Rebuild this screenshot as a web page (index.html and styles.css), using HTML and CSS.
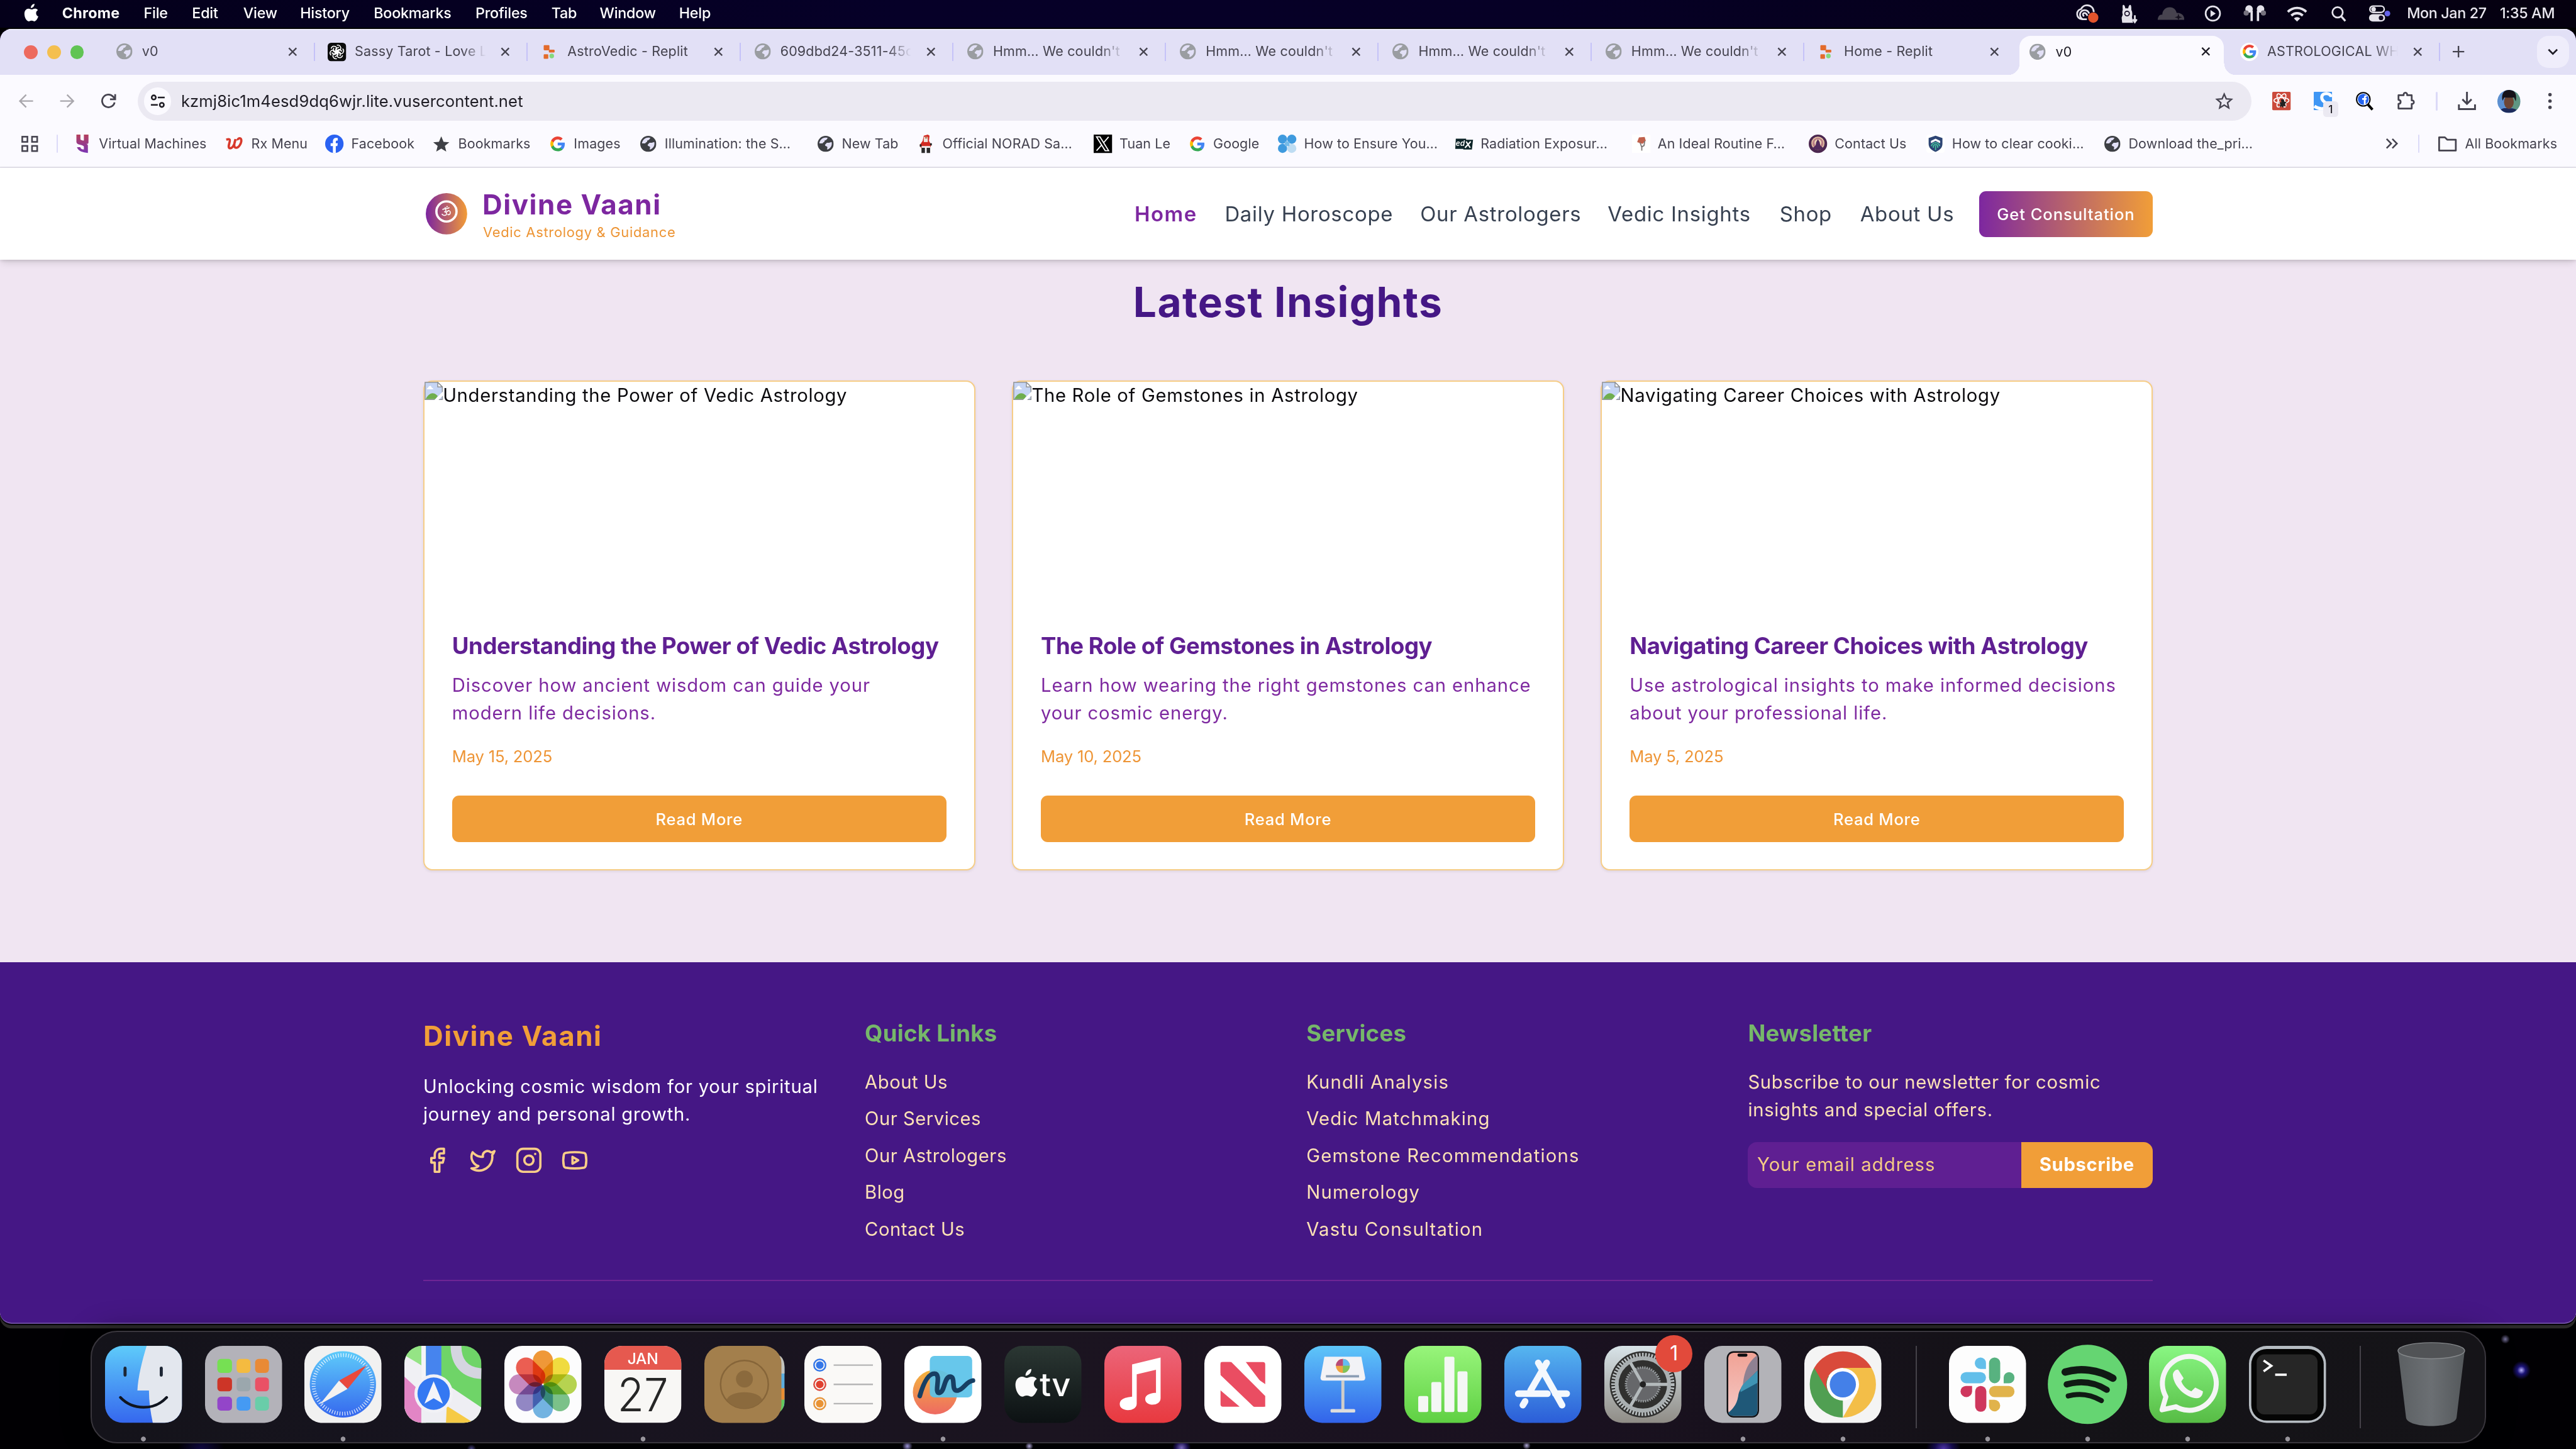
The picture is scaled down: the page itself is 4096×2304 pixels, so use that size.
FILE: index.html
```html
<!DOCTYPE html>
<html lang="en">
<head>
<meta charset="utf-8">
<title>Divine Vaani</title>
<link rel="stylesheet" href="styles.css">
</head>
<body>
<svg class="symbols" aria-hidden="true">
  <symbol id="globe" viewBox="0 0 28 28"><circle cx="14" cy="14" r="14" fill="currentColor"/><path class="land" d="M3 14C3 8 8 3 14 3c2 0 3 .3 4 .8-2 1-1.500 2.200-3 3.200-2 1-3 .5-3 2.500s-3 1.500-3 3.500H3zM24.500 11c1 5-1 9-4.500 11.500-1 .8-2 1-3 1.500-1-1 .5-3 0-4.500s-3.500-1-4-3 1.500-2 2-3.500 3.500-1 5-1 2.500-1.500 4.500-1z"/></symbol>
  <symbol id="google" viewBox="0 0 24 24"><path fill="#4285f4" d="M22.600 12.200c0-.8-.1-1.500-.2-2.200H12v4.300h5.900a5 5 0 0 1-2.200 3.300v2.800h3.600c2.100-2 3.300-4.800 3.300-8.200z"/><path fill="#34a853" d="M12 23c3 0 5.500-1 7.300-2.700l-3.600-2.700c-1 .7-2.200 1-3.700 1-2.900 0-5.300-1.900-6.200-4.500H2.200v2.800A11 11 0 0 0 12 23z"/><path fill="#fbbc05" d="M5.800 14.100a6.600 6.600 0 0 1 0-4.200V7.100H2.200a11 11 0 0 0 0 9.800z"/><path fill="#ea4335" d="M12 5.400c1.600 0 3.100.6 4.200 1.700l3.200-3.200A11 11 0 0 0 2.200 7.100l3.600 2.800C6.700 7.300 9.100 5.400 12 5.400z"/></symbol>
  <symbol id="replit" viewBox="0 0 32 32"><rect x="6" y="4" width="10" height="9" rx="1.500" fill="#e36b2c"/><rect x="15" y="12" width="10" height="5" rx="1.500" fill="#e36b2c"/><rect x="6" y="20" width="8" height="8" rx="1.500" fill="#e36b2c"/><circle cx="20" cy="23" r="4" fill="#84d87c"/></symbol>
  <symbol id="close" viewBox="0 0 16 16"><path d="M1.500 1.500l13 13M14.500 1.500l-13 13" stroke="currentColor" stroke-width="2.600" fill="none"/></symbol>
  <symbol id="broken" viewBox="0 0 32 32"><path d="M1 1h22l8 8v22H1z" fill="#c6d5f4" stroke="#8f9296" stroke-width="1.600"/><path d="M23 1v8h8z" fill="#fff" stroke="#8f9296" stroke-width="1.600"/><path d="M4 13c0-2 2-2 3-4s4-3 5 0 3 1 3 4z" fill="#fff"/><path d="M2 30c3-5 7-10 12-10s8 4 9 5l-4 5z" fill="#6fae4e"/><path d="M17 32l15-15v7l-8 8z" fill="#fff"/></symbol>
  <symbol id="apple" viewBox="0 0 28 32"><path fill="currentColor" d="M19.500 0c.2 2-.6 3.800-1.800 5.200-1.200 1.400-3 2.300-4.600 2.200-.2-1.900.7-3.800 1.800-5C16.100 1 18 .1 19.500 0zM25.500 11c-2 1.200-3.200 3-3.200 5.300 0 2.700 1.600 4.800 3.900 5.700-.9 2.700-3.500 8.400-6.700 8.500-1.900 0-2.600-1.200-5-1.200s-3.100 1.200-5 1.200C5.600 30.400 2 23.500 2 17.500c0-5.600 3.400-9 7.200-9 2.200 0 3.900 1.400 5.300 1.400 1.300 0 3.300-1.600 6-1.500 1.500 0 3.700.6 5 2.600z"/></symbol>
</svg>

<nav class="menubar">
  <ul class="menus">
    <li><svg class="apple"><use href="#apple"/></svg></li>
    <li class="app">Chrome</li><li>File</li><li>Edit</li><li>View</li><li>History</li><li>Bookmarks</li><li>Profiles</li><li>Tab</li><li>Window</li><li>Help</li>
  </ul>
  <div class="status">
    <svg viewBox="0 0 40 34"><path d="M12 27a9 9 0 0 1-9-9c0-5 3.500-8 7-9 2-4 5.500-6.500 10-6.500 7 0 12 5 12 12M13 27c-4-2-5-5-5-8 0-5 4-8 8-8s7 3 8 6M12 27h8M15 22c-3-3-2-6 1-6s4 3 5 5" fill="none" stroke="#e4e2ea" stroke-width="3"/><circle cx="31" cy="24" r="9" fill="#e2542c"/></svg>
    <svg viewBox="0 0 40 34"><path d="M9 2c2 0 3 3 3.500 6h5C18 5 19 2 21 2c2 0 2 5 2 9 2 3 2 9 1 12l2 10H7l-1-9 2-5c-1-3-1-6 0-8 0-4-1-9 1-9z" fill="#e4e2ea"/><circle cx="15.500" cy="17" r="4" fill="none" stroke="#120a24" stroke-width="1.800"/><path d="M29 20v10M25.500 27l3.500 5 3.500-5" stroke="#e4e2ea" stroke-width="3" fill="none"/></svg>
    <svg viewBox="0 0 48 34"><path d="M1 28c0-6 4-10 8-9C9 11 15 6 22 6s11 5 12 10c8-1 14 5 13 12z" fill="#47434f"/><path d="M37 17l1.500 5 5 1.500-5 1.500-1.500 4-1.500-4-5-1.500 5-1.500z" fill="#15101f"/></svg>
    <svg viewBox="0 0 34 34"><circle cx="17" cy="17" r="12.500" fill="none" stroke="#e4e2ea" stroke-width="3"/><path d="M13 11v12l9-6z" fill="#e4e2ea"/></svg>
    <svg viewBox="0 0 40 34"><circle cx="10" cy="9" r="6.500" fill="#e4e2ea"/><circle cx="30" cy="9" r="6.500" fill="#e4e2ea"/><path d="M14.500 12v18M25.500 12v18" stroke="#e4e2ea" stroke-width="4"/><circle cx="5" cy="16" r="4.500" fill="#77737f"/><circle cx="35" cy="16" r="4.500" fill="#77737f"/></svg>
    <svg viewBox="0 0 36 34"><path d="M2 14c9-9 23-9 32 0M8 20.500c6-5.500 14-5.500 20 0" fill="none" stroke="#e4e2ea" stroke-width="4.200"/><path d="M12.500 25.500c3-3 8-3 11 0L18 31z" fill="#e4e2ea"/></svg>
    <svg viewBox="0 0 30 34"><circle cx="13" cy="15" r="9" fill="none" stroke="#e4e2ea" stroke-width="3"/><path d="M19.500 22l7 8" stroke="#e4e2ea" stroke-width="3.500"/></svg>
    <svg viewBox="0 0 40 34"><rect x="3.500" y="4" width="25" height="11" rx="5.500" fill="none" stroke="#e4e2ea" stroke-width="2.600"/><circle cx="10" cy="9.500" r="4" fill="#e4e2ea"/><rect x="2" y="18" width="28" height="13" rx="6.500" fill="#e4e2ea"/><circle cx="23" cy="24.500" r="4" fill="#120a24"/><circle cx="34" cy="17" r="5" fill="#6664e8"/></svg>
  </div>
  <div class="clock"><span>Mon Jan 27</span><span>1:35 AM</span></div>
</nav>

<main class="window">
  <div class="tabstrip">
    <div class="lights"><i class="red"></i><i class="amber"></i><i class="green"></i></div>
    <div class="tab"><svg class="fav grey"><use href="#globe"/></svg><span class="title">v0</span><svg class="x"><use href="#close"/></svg></div>
    <div class="tab"><svg class="fav big" viewBox="0 0 32 32"><rect width="32" height="32" rx="6" fill="#0c0c0d"/><g fill="none" stroke="#fff" stroke-width="1.700"><path id="knot" d="M16 4.500c5-1.500 8 3 6.500 7L14 16.500v-6l5.500-3"/><use href="#knot" transform="rotate(60 16 16)"/><use href="#knot" transform="rotate(120 16 16)"/><use href="#knot" transform="rotate(180 16 16)"/><use href="#knot" transform="rotate(240 16 16)"/><use href="#knot" transform="rotate(300 16 16)"/></g></svg><span class="title fade">Sassy Tarot - Love L</span><svg class="x"><use href="#close"/></svg></div>
    <div class="tab"><svg class="fav big"><use href="#replit"/></svg><span class="title">AstroVedic - Replit</span><svg class="x"><use href="#close"/></svg></div>
    <div class="tab"><svg class="fav grey"><use href="#globe"/></svg><span class="title fade">609dbd24-3511-45c</span><svg class="x"><use href="#close"/></svg></div>
    <div class="tab"><svg class="fav grey"><use href="#globe"/></svg><span class="title fade">Hmm… We couldn't</span><svg class="x"><use href="#close"/></svg></div>
    <div class="tab"><svg class="fav grey"><use href="#globe"/></svg><span class="title fade">Hmm… We couldn't</span><svg class="x"><use href="#close"/></svg></div>
    <div class="tab"><svg class="fav grey"><use href="#globe"/></svg><span class="title fade">Hmm… We couldn't</span><svg class="x"><use href="#close"/></svg></div>
    <div class="tab"><svg class="fav grey"><use href="#globe"/></svg><span class="title fade">Hmm… We couldn't</span><svg class="x"><use href="#close"/></svg></div>
    <div class="tab plain"><svg class="fav big"><use href="#replit"/></svg><span class="title">Home - Replit</span><svg class="x"><use href="#close"/></svg></div>
    <div class="tab active"><svg class="fav grey"><use href="#globe"/></svg><span class="title">v0</span><svg class="x"><use href="#close"/></svg></div>
    <div class="tab"><span class="fav big disc"><svg><use href="#google"/></svg></span><span class="title fade">ASTROLOGICAL WH</span><svg class="x"><use href="#close"/></svg></div>
    <svg class="plus" viewBox="0 0 20 20"><path d="M10 0v20M0 10h20" stroke="currentColor" stroke-width="2.600"/></svg>
    <div class="tabsearch"><svg viewBox="0 0 18 12"><path d="M1.500 2L9 9.500 16.500 2" fill="none" stroke="currentColor" stroke-width="3"/></svg></div>
  </div>

  <div class="toolbar">
    <svg class="tool dim" viewBox="0 0 32 32"><path d="M28 16H6M16 5L5 16l11 11" fill="none" stroke="currentColor" stroke-width="2.600"/></svg>
    <svg class="tool dim" viewBox="0 0 32 32"><path d="M4 16h22M16 5l11 11-11 11" fill="none" stroke="currentColor" stroke-width="2.600"/></svg>
    <svg class="tool" viewBox="0 0 32 32"><path d="M26.500 18.500A11 11 0 1 1 24 8.500L27 12M27.500 4v9h-9" fill="none" stroke="currentColor" stroke-width="3"/></svg>
    <div class="omnibox">
      <span class="site"><svg viewBox="0 0 26 26"><g fill="none" stroke="currentColor" stroke-width="2.800"><circle cx="6" cy="6.500" r="3.600"/><path d="M13 6.500h12M1 19.500h12"/><circle cx="20" cy="19.500" r="3.600"/></g></svg></span>
      <span class="url">kzmj8ic1m4esd9dq6wjr.lite.vusercontent.net</span>
      <svg class="star" viewBox="0 0 32 32"><path d="M16 4l3.600 8.200 9 .8-6.800 6 2 8.800L16 23l-7.800 4.800 2-8.800-6.800-6 9-.8z" fill="none" stroke="currentColor" stroke-width="2.600"/></svg>
    </div>
    <div class="extensions">
      <svg viewBox="0 0 32 32"><rect width="32" height="32" rx="2" fill="#cb4b3b"/><g fill="none" stroke="#fff" stroke-width="1.800"><ellipse cx="16" cy="15" rx="13" ry="5"/><ellipse cx="16" cy="15" rx="13" ry="5" transform="rotate(60 16 15)"/><ellipse cx="16" cy="15" rx="13" ry="5" transform="rotate(120 16 15)"/></g><path d="M15 13h5l1 4 4 1-3 3 2 5-4-2-1 4-3-3-3 2 1-6-2-2 4-1z" fill="#222"/></svg>
      <span class="ext"><svg viewBox="0 0 32 32"><clipPath id="tile"><rect width="32" height="32" rx="1"/></clipPath><g clip-path="url(#tile)"><rect width="32" height="32" fill="#3f96f4"/><path d="M30 9C30 2 15 0 14 9s10 9 9 15-12 8-22 1" fill="none" stroke="#fff" stroke-width="5.500"/></g></svg><b class="count">1</b></span>
      <svg viewBox="0 0 32 32"><path d="M21 21l9 10" stroke="#000" stroke-width="4.500"/><circle cx="14" cy="13" r="11.500" fill="#2464f0" stroke="#000" stroke-width="2.600"/><circle cx="14" cy="13" r="10" fill="none" stroke="#fff" stroke-width="1.200"/><path d="M15 22v-8h-3v-3h3c0-4 1-5.500 5-5v3c-2 0-2 0-2 2h2l-.5 3H18v8z" fill="#fff"/></svg>
      <svg viewBox="0 0 32 32"><path d="M3 6h9c-1-6 7-6 6 0h8v9c5-1 5 7 0 6v8H3v-8c5 0 5-7 0-7z" fill="none" stroke="currentColor" stroke-width="3" stroke-linejoin="round"/></svg>
      <i class="sep"></i>
      <svg viewBox="0 0 32 32"><path d="M16 0v20M8 13l8 8 8-8M2 22v8h28v-8" fill="none" stroke="currentColor" stroke-width="3.200"/></svg>
      <svg class="avatar" viewBox="0 0 40 40"><clipPath id="face"><circle cx="20" cy="20" r="20"/></clipPath><g clip-path="url(#face)"><rect width="40" height="40" fill="#5b8fd0"/><rect x="26" width="14" height="40" fill="#5f9683"/><path d="M4 40c2-10 8-8 16-8s14 0 16 8z" fill="#1d2b5c"/><ellipse cx="20" cy="21" rx="8.500" ry="12" fill="#6e4635"/><path d="M9 19C6 6 12 0 20 0s15 4 12 20l-3-7c-6 1-12 0-17 0z" fill="#15121a"/></g></svg>
      <svg class="dots" viewBox="0 0 8 32"><circle cx="4" cy="5" r="3" fill="currentColor"/><circle cx="4" cy="16" r="3" fill="currentColor"/><circle cx="4" cy="27" r="3" fill="currentColor"/></svg>
    </div>
  </div>

  <div class="bookmarks">
    <svg class="apps" viewBox="0 0 30 28"><g fill="none" stroke="currentColor" stroke-width="2.800"><rect x="1.500" y="1.500" width="9" height="9"/><rect x="18.500" y="1.500" width="9" height="9"/><rect x="1.500" y="17.500" width="9" height="9"/><rect x="18.500" y="17.500" width="9" height="9"/></g></svg>
    <i class="sep"></i>
    <ul class="marks">
      <li><svg viewBox="0 0 32 32"><defs><linearGradient id="vm" x2="0" y2="1"><stop stop-color="#b5405c"/><stop offset="1" stop-color="#7a35b4"/></linearGradient></defs><path d="M6 0h7v8c0 2 6 3 6 2V0h8v13c0 3-1 3-4 3 3 1 3 2 3 4v12c-9-1-17-3-19-10h6c0 3 3 4 6 4v-5c0-4-12-2-13-8z" fill="url(#vm)"/></svg><span>Virtual Machines</span></li>
      <li><svg viewBox="0 0 32 32"><path d="M2 9c7-3 7 0 5 7s0 9 4 7 6-9 7-15c-2 6-4 15 1 15s10-9 9-14-7-2-6 1" fill="none" stroke="#d8392c" stroke-width="4"/></svg><span>Rx Menu</span></li>
      <li><svg viewBox="0 0 32 32"><circle cx="16" cy="16" r="16" fill="#2a62f2"/><path d="M13.500 32V20H9.500v-5h4v-3c0-5 3-7 8.500-6v4.500c-3-.3-3.500 0-3.500 4.500h3.500l-.8 5h-2.700v12z" fill="#fff"/></svg><span>Facebook</span></li>
      <li><svg viewBox="0 0 32 32"><path d="M16 3l4 9.500 10 .8-7.700 6.500 2.400 9.800L16 24.400l-8.700 5.200 2.400-9.800L2 13.300l10-.8z" fill="#3f4046"/></svg><span>Bookmarks</span></li>
      <li><svg class="g"><use href="#google"/></svg><span>Images</span></li>
      <li><svg class="gl"><use href="#globe"/></svg><span>Illumination: the S…</span></li>
      <li><svg class="gl"><use href="#globe"/></svg><span>New Tab</span></li>
      <li><svg viewBox="0 0 32 32"><path d="M13 2l7-2 3 2-1 9 4 7-2 5H8l-2-5 5-7z" fill="#d32b22"/><rect x="13" y="4" width="7" height="9" fill="#efe5df"/><rect x="15" y="4" width="4" height="3" fill="#b98160"/><path d="M9 22h6v10H9zM18 22h6v10h-6z" fill="#2a2a2a"/><path d="M9 20h15v3H9z" fill="#f3eeee"/><path d="M6 17h3v4H6zM24 15h3v4h-3z" fill="#222"/></svg><span>Official NORAD Sa…</span></li>
      <li><svg viewBox="0 0 32 32"><rect width="32" height="32"/><path d="M5 4h6l15 24h-6zM26 4L17 14.500M14 18L5 28" fill="none" stroke="#fff" stroke-width="2"/></svg><span>Tuan Le</span></li>
      <li><svg class="g"><use href="#google"/></svg><span>Google</span></li>
      <li><svg viewBox="0 0 32 32"><g fill="#3f9ade"><circle cx="8" cy="8" r="8"/><circle cx="24" cy="8" r="8"/><circle cx="8" cy="24" r="8"/></g><circle cx="24" cy="24" r="8" fill="#bedcf2"/><rect x="12" y="12" width="8" height="8" fill="#77bce9"/></svg><span>How to Ensure You…</span></li>
      <li><svg viewBox="0 0 32 32"><path d="M2 7h18l-1 18H1zM17 9h15l-2 17H15z" fill="#0d2428"/><text x="2" y="20" font-family="Inter" font-size="13" font-weight="600" font-style="italic" fill="#fff">ed</text><path d="M20 12l7 11M28 12L18 23" stroke="#fff" stroke-width="2.400"/></svg><span>Radiation Exposur…</span></li>
      <li><svg viewBox="0 0 32 32"><rect width="32" height="32" fill="#fff"/><path d="M12 5l10-1 2 7-6 5-9-3z" fill="#c0614c"/><path d="M14 14l3 8v6M22 11l-1 8-5 3" fill="none" stroke="#7f7a78" stroke-width="2"/></svg><span>An Ideal Routine F…</span></li>
      <li><svg viewBox="0 0 32 32"><circle cx="16" cy="16" r="16" fill="#4c2750"/><circle cx="16" cy="15" r="10.500" fill="#b97d86" stroke="#e2c0a0" stroke-width="2"/><circle cx="16" cy="14" r="6" fill="#eed5b8"/><path d="M16 8l3 5 1 6 6 5c-6 3-14 3-20 0l6-5 1-6z" fill="#522a5c"/></svg><span>Contact Us</span></li>
      <li><svg viewBox="0 0 32 32"><rect width="32" height="32" rx="5" fill="#fff"/><path d="M16 2l12 4v10c0 7-5 11-12 14C9 27 4 23 4 16V6z" fill="#2d4474"/><path d="M8 11l8-4 8 4v4l-8-4-8 4z" fill="#fff"/><path d="M9 20c1-8 13-8 14 0M12 23c0-8 8-8 8 0M16 19v8" fill="none" stroke="#45bd9b" stroke-width="2"/></svg><span>How to clear cooki…</span></li>
      <li><svg class="gl"><use href="#globe"/></svg><span>Download the_pri…</span></li>
    </ul>
    <svg class="more" viewBox="0 0 22 18"><path d="M2 1l8 8-8 8M12 1l8 8-8 8" fill="none" stroke="currentColor" stroke-width="2.800"/></svg>
    <i class="sep"></i>
    <div class="all"><svg viewBox="0 0 32 26"><path d="M1.500 1.500h10l4 4h15v19h-29z" fill="none" stroke="currentColor" stroke-width="3" stroke-linejoin="round"/></svg><span>All Bookmarks</span></div>
  </div>

  <div class="page">
    <header class="site-header">
      <div class="brand">
        <svg class="logo" viewBox="0 0 72 72"><defs><linearGradient id="lg"><stop stop-color="#7b24a0"/><stop offset="1" stop-color="#f39c36"/></linearGradient></defs><circle cx="36" cy="36" r="36" fill="url(#lg)"/><circle cx="36" cy="32" r="17.500" fill="none" stroke="#fff" stroke-width="4"/><path d="M29 29c3-3 7-1 6 1.500-.5 1.500-2 2-3 2 3 0 5 2 4 4.500-1.500 3-7 2-8-1M35 33c3 0 3-3 5.500-2.500 3 1 3 6 0 7-1 .5-2 0-2.500-1M33 25c2 2.500 6 2.500 8 0" fill="none" stroke="#fff" stroke-width="1.700"/><circle cx="37" cy="23.600" r="1.200" fill="#fff"/></svg>
        <div><div class="brand-name">Divine Vaani</div><div class="brand-sub">Vedic Astrology &amp; Guidance</div></div>
      </div>
      <div class="links"><a class="home">Home</a><a>Daily Horoscope</a><a>Our Astrologers</a><a>Vedic Insights</a><a>Shop</a><a>About Us</a></div>
      <button class="consult">Get Consultation</button>
    </header>

    <section class="insights">
      <h2>Latest Insights</h2>
      <div class="cards">
        <article class="card">
          <div class="image"><svg><use href="#broken"/></svg><span>Understanding the Power of Vedic Astrology</span></div>
          <div class="body"><h3>Understanding the Power of Vedic Astrology</h3><p>Discover how ancient wisdom can guide your<br>modern life decisions.</p><time>May 15, 2025</time><button>Read More</button></div>
        </article>
        <article class="card">
          <div class="image"><svg><use href="#broken"/></svg><span>The Role of Gemstones in Astrology</span></div>
          <div class="body"><h3>The Role of Gemstones in Astrology</h3><p>Learn how wearing the right gemstones can enhance<br>your cosmic energy.</p><time>May 10, 2025</time><button>Read More</button></div>
        </article>
        <article class="card">
          <div class="image"><svg><use href="#broken"/></svg><span>Navigating Career Choices with Astrology</span></div>
          <div class="body"><h3>Navigating Career Choices with Astrology</h3><p>Use astrological insights to make informed decisions<br>about your professional life.</p><time>May 5, 2025</time><button>Read More</button></div>
        </article>
      </div>
    </section>

    <footer class="footer">
      <div class="columns">
        <div>
          <div class="foot-name">Divine Vaani</div>
          <p class="about">Unlocking cosmic wisdom for your spiritual<br>journey and personal growth.</p>
          <div class="social">
            <svg viewBox="0 0 24 24"><path d="M18 2h-3a5 5 0 0 0-5 5v3H7v4h3v8h4v-8h3l1-4h-4V7a1 1 0 0 1 1-1h3z"/></svg>
            <svg viewBox="0 0 24 24"><path d="M22 4s-.7 2.100-2 3.400c1.600 10-9.400 17.300-18 11.600 2.200.1 4.400-.6 6-2C3 15.500.5 9.600 3 5c2.200 2.600 5.600 4.100 9 4-.9-4.200 4-6.600 7-3.800 1.100 0 3-1.200 3-1.200z"/></svg>
            <svg viewBox="0 0 24 24"><rect x="2" y="2" width="20" height="20" rx="5"/><path d="M16 11.370A4 4 0 1 1 12.630 8 4 4 0 0 1 16 11.370zM17.500 6.500h.01"/></svg>
            <svg viewBox="0 0 24 24"><path d="M2.500 17a24.120 24.120 0 0 1 0-10 2 2 0 0 1 1.400-1.400 49.560 49.560 0 0 1 16.200 0A2 2 0 0 1 21.500 7a24.120 24.120 0 0 1 0 10 2 2 0 0 1-1.400 1.400 49.550 49.550 0 0 1-16.200 0A2 2 0 0 1 2.500 17M10 15l5-3-5-3z"/></svg>
          </div>
        </div>
        <div class="quick"><h4>Quick Links</h4><ul><li>About Us</li><li>Our Services</li><li>Our Astrologers</li><li>Blog</li><li>Contact Us</li></ul></div>
        <div class="services"><h4>Services</h4><ul><li>Kundli Analysis</li><li>Vedic Matchmaking</li><li>Gemstone Recommendations</li><li>Numerology</li><li>Vastu Consultation</li></ul></div>
        <div><h4>Newsletter</h4><p class="offer">Subscribe to our newsletter for cosmic<br>insights and special offers.</p><div class="form"><input placeholder="Your email address"><button>Subscribe</button></div></div>
      </div>
    </footer>
  </div>
</main>

<div class="dock">
  <svg viewBox="0 0 100 100" class="on"><defs><clipPath id="sq"><rect width="100" height="100" rx="23"/></clipPath><linearGradient id="fb" x2="0" y2="1"><stop stop-color="#5ecbfa"/><stop offset="1" stop-color="#3567ee"/></linearGradient></defs><g clip-path="url(#sq)"><rect width="100" height="100" fill="url(#fb)"/><path d="M54 0C48 20 43 40 42 58h15c0 14 2 28 5 42h38V0z" fill="#e3e7ee"/><path d="M26 29v9M73 29v9" stroke="#1d2634" stroke-width="4" stroke-linecap="round"/><path d="M20 67c16 17 44 17 60 0" fill="none" stroke="#10151f" stroke-width="3.500" stroke-linecap="round"/></g></svg>
  <svg viewBox="0 0 100 100"><rect width="100" height="100" rx="23" fill="#b3b2b9"/><g><rect x="16" y="17" width="19" height="18" rx="4.500" fill="#76e053"/><rect x="41" y="17" width="18" height="18" rx="4.500" fill="#f4bb40"/><rect x="65" y="17" width="18" height="18" rx="4.500" fill="#e98a35"/><rect x="16" y="41" width="19" height="18" rx="4.500" fill="#cd3527"/><rect x="41" y="41" width="18" height="18" rx="4.500" fill="#9ba7ad"/><rect x="65" y="41" width="18" height="18" rx="4.500" fill="#ea5165"/><rect x="16" y="66" width="19" height="18" rx="4.500" fill="#9345c9"/><rect x="41" y="66" width="18" height="18" rx="4.500" fill="#459af3"/><rect x="65" y="66" width="18" height="18" rx="4.500" fill="#69cda9"/></g></svg>
  <svg viewBox="0 0 100 100" class="on"><rect width="100" height="100" rx="23" fill="#f1f1f1"/><circle cx="50" cy="50" r="43" fill="url(#fb)"/><circle cx="50" cy="50" r="38" fill="none" stroke="#fff" stroke-width="5" stroke-dasharray="1 2.316" opacity=".85"/><path d="M81 25L56 56 45 45z" fill="#e9493c"/><path d="M20 76l25-31 11 11z" fill="#f4f2f0"/></svg>
  <svg viewBox="0 0 100 100"><g clip-path="url(#sq)"><rect width="100" height="100" fill="#6fd468"/><path d="M0 10l22 15v75H0z" fill="#f0f0f4"/><path d="M0 0h22v25L0 12z" fill="#95e485"/><path d="M0 40l24 22v38H0z" fill="#e285c5"/><rect x="22" y="0" width="6" height="100" fill="#f4f4f7"/><rect x="28" width="20" height="50" fill="#4684ee"/><path d="M48 45l52 35v20H22V80z" fill="#eeeef3"/><path d="M55 78l35 22H54z" fill="#f6ca45"/><path d="M67 0c0 22 12 35 33 36" fill="none" stroke="#d5d5e0" stroke-width="14"/></g><circle cx="38" cy="62" r="25" fill="#f1f1f6"/><circle cx="38" cy="62" r="21" fill="#3478f2"/><path d="M38 46l12 29-12-7-12 7z" fill="#f4f4f8"/></svg>
  <svg viewBox="0 0 100 100"><rect width="100" height="100" rx="23" fill="#fcfcfd"/><g class="petals"><rect x="37" y="6" width="26" height="43" rx="13" fill="#f29a38"/><rect x="37" y="6" width="26" height="43" rx="13" fill="#f3de3f" transform="rotate(45 50 50)"/><rect x="37" y="6" width="26" height="43" rx="13" fill="#b8d650" transform="rotate(90 50 50)"/><rect x="37" y="6" width="26" height="43" rx="13" fill="#7cc48a" transform="rotate(135 50 50)"/><rect x="37" y="6" width="26" height="43" rx="13" fill="#74b5e3" transform="rotate(180 50 50)"/><rect x="37" y="6" width="26" height="43" rx="13" fill="#9489c6" transform="rotate(225 50 50)"/><rect x="37" y="6" width="26" height="43" rx="13" fill="#c98bc0" transform="rotate(270 50 50)"/><rect x="37" y="6" width="26" height="43" rx="13" fill="#ee5f52" transform="rotate(315 50 50)"/></g></svg>
  <svg viewBox="0 0 100 100" class="on"><g clip-path="url(#sq)"><rect width="100" height="100" fill="#f8f7f5"/><rect width="100" height="31" fill="#e6594f"/></g><text x="50" y="24" text-anchor="middle" font-family="Inter" font-size="20" font-weight="500" textLength="40" fill="#fff">JAN</text><text x="50" y="85" text-anchor="middle" font-family="Inter" font-size="60" font-weight="300" textLength="66" lengthAdjust="spacingAndGlyphs" fill="#262626">27</text></svg>
  <svg viewBox="0 0 100 100"><path d="M80 12q24 2 24 16v46q0 13-24 14z" fill="#5caedf"/><path d="M96 12q8 3 8 16v8h-8z" fill="#c3c3bd"/><path d="M95 55h9v15h-9z" fill="#eb8f33"/><path d="M95 70h9q0 14-9 17z" fill="#63c95c"/><rect width="100" height="100" rx="23" fill="#a37f4c"/><circle cx="52" cy="50" r="31" fill="none" stroke="#866539" stroke-width="2"/><circle cx="52" cy="43" r="11" fill="#8b6a3d"/><path d="M29 70c4-13 42-13 46 0-11 15-35 15-46 0z" fill="#8b6a3d"/></svg>
  <svg viewBox="0 0 100 100"><rect width="100" height="100" rx="23" fill="#faf9f7"/><path d="M38 25h51M38 50h51M38 75h51" stroke="#b5b5b5" stroke-width="2"/><g fill="none" stroke-width="2"><circle cx="20" cy="25" r="7.500" stroke="#3577e8"/><circle cx="20" cy="50" r="7.500" stroke="#dd4b3e"/><circle cx="20" cy="75" r="7.500" stroke="#e7963c"/></g><circle cx="20" cy="25" r="5" fill="#3577e8"/><circle cx="20" cy="50" r="5" fill="#e0402f"/><circle cx="20" cy="75" r="5" fill="#e99335"/></svg>
  <svg viewBox="0 0 100 100" class="on"><defs><linearGradient id="ff" x2="0" y2="1"><stop stop-color="#f3b53d"/><stop offset="1" stop-color="#ee6a62"/></linearGradient></defs><rect width="100" height="100" rx="23" fill="#fff"/><ellipse cx="40" cy="60" rx="29" ry="29" fill="url(#ff)"/><rect x="33" y="13" width="55" height="54" rx="6" fill="#5bc3ea" opacity=".93"/><path d="M20 65c4-14 10-29 19-29 10 0-1 25 6 25 8 0 6-22 15-21 7 1 0 19 9 18 8-1 11-12 20-13" fill="none" stroke="#173f63" stroke-width="6" stroke-linecap="round"/></svg>
  <svg viewBox="0 0 100 100"><defs><linearGradient id="tv" x2="0" y2="1"><stop stop-color="#2b3733"/><stop offset="1" stop-color="#0c1113"/></linearGradient></defs><rect width="100" height="100" rx="23" fill="url(#tv)"/><path transform="translate(12 30) scale(1.180)" fill="#fafafa" d="M19.500 0c.2 2-.6 3.800-1.800 5.200-1.200 1.400-3 2.300-4.600 2.200-.2-1.900.7-3.800 1.800-5C16.100 1 18 .1 19.500 0zM25.500 11c-2 1.200-3.200 3-3.200 5.300 0 2.700 1.600 4.800 3.900 5.700-.9 2.700-3.500 8.400-6.700 8.500-1.900 0-2.600-1.200-5-1.200s-3.100 1.200-5 1.200C5.600 30.400 2 23.500 2 17.500c0-5.600 3.400-9 7.200-9 2.200 0 3.900 1.400 5.300 1.400 1.300 0 3.300-1.600 6-1.500 1.500 0 3.700.6 5 2.600z"/><text x="46" y="65.500" font-family="Inter" font-size="42" font-weight="500" textLength="40" lengthAdjust="spacingAndGlyphs" fill="#fafafa">tv</text></svg>
  <svg viewBox="0 0 100 100"><defs><linearGradient id="mu" x2="0" y2="1"><stop stop-color="#ec6579"/><stop offset="1" stop-color="#e8393f"/></linearGradient></defs><rect width="100" height="100" rx="23" fill="url(#mu)"/><path d="M36 24l37-9v53c0 11-20 11-20 1 0-6 8-8 14-8V31l-25 6v38c0 11-22 11-22 1 0-8 9-9 16-10z" fill="#fff"/></svg>
  <svg viewBox="0 0 100 100"><rect width="100" height="100" rx="23" fill="#fff"/><rect x="21" y="21" width="58" height="58" rx="3" fill="#ea4d62"/><path d="M34 19h18l29 40v-8zM19 50v-10l28 41h18z" fill="#fff"/><path d="M33 20L81 80V57L53 20zM20 37v20l27 23h18z" fill="#fff"/><path d="M21 22v13l44 44h14V65L35 21H22z" fill="#ea4d62"/></svg>
  <svg viewBox="0 0 100 100"><defs><linearGradient id="kn" x2="0" y2="1"><stop stop-color="#5ec6f9"/><stop offset="1" stop-color="#3263ea"/></linearGradient></defs><rect width="100" height="100" rx="23" fill="url(#kn)"/><path d="M26 14h48l5 27c0 3-1 4-4 4H25c-3 0-4-1-4-4z" fill="#f2f2f6"/><path d="M28 38h43v3H28z" fill="#8b9db4"/><path d="M48 45h4v38h-4z" fill="#d0cdc9"/><rect x="34" y="82" width="32" height="4.500" rx="1.500" fill="#ddd"/><circle cx="50" cy="26" r="9" fill="#f1a340"/><path d="M50 17a9 9 0 0 1 9 9h-9z" fill="#63bdf2"/><path d="M59 26a9 9 0 0 1-9 9v-9z" fill="#7ec45c"/><path d="M50 17a9 9 0 0 0-9 9h9z" fill="#b74a79"/></svg>
  <svg viewBox="0 0 100 100"><defs><linearGradient id="nu" x2="0" y2="1"><stop stop-color="#98f57b"/><stop offset="1" stop-color="#5fd043"/></linearGradient></defs><rect width="100" height="100" rx="23" fill="url(#nu)"/><g fill="#f4f7f4"><rect x="18" y="65" width="13" height="21" rx="2"/><rect x="35" y="47" width="13" height="39" rx="2"/><rect x="52" y="14" width="13" height="72" rx="2"/><rect x="69" y="33" width="13" height="53" rx="2"/></g></svg>
  <svg viewBox="0 0 100 100"><defs><linearGradient id="as" x2="0" y2="1"><stop stop-color="#56b6f0"/><stop offset="1" stop-color="#2b5dd8"/></linearGradient></defs><rect width="100" height="100" rx="23" fill="url(#as)"/><g stroke="#f4f8fd" stroke-width="8.500" stroke-linecap="round"><path d="M55 22L34 58M44 22l31 55M18 62h38M66 62h15M27 72l-3 5"/></g></svg>
  <span class="badged"><svg viewBox="0 0 100 100"><defs><linearGradient id="se" x2="0" y2="1"><stop stop-color="#d8e3e8"/><stop offset="1" stop-color="#8f8c86"/></linearGradient></defs><rect width="100" height="100" rx="23" fill="url(#se)"/><circle cx="50" cy="50" r="43" fill="#30302f"/><circle cx="50" cy="50" r="38.500" fill="none" stroke="#b8bec0" stroke-width="5" stroke-dasharray="2.200 1.800"/><circle cx="50" cy="50" r="34" fill="none" stroke="#a9afb1" stroke-width="5"/><circle cx="50" cy="50" r="22" fill="#66676a" stroke="#989da0" stroke-width="3" stroke-dasharray="1.500 1.500"/><path d="M50 50h32M50 50L34 22M50 50L34 78" stroke="#b4babc" stroke-width="4"/><circle cx="50" cy="50" r="4" fill="#222"/></svg><b class="badge">1</b></span>
  <svg viewBox="0 0 100 100" class="on"><defs><linearGradient id="ph" x1="0" y1="0" x2="0" y2="1"><stop stop-color="#f0a295"/><stop offset="1" stop-color="#f5c9c6"/></linearGradient></defs><rect width="100" height="100" rx="23" fill="#b3b3b8"/><rect x="29" y="7" width="42" height="86" rx="9" fill="#0f0f12"/><rect x="31" y="9" width="38" height="82" rx="7" fill="url(#ph)"/><path d="M69 12c-14 10-18 25-19 40l19-8z" fill="#8f8192"/><path d="M69 32C56 46 46 52 44 65s-9 18-13 22q1 4 7 4h24q7 0 7-7z" fill="#1f5878"/><path d="M69 32C56 46 46 50 47 60l22-12z" fill="#3f94b4"/><rect x="43" y="10" width="13" height="4" rx="2" fill="#0f0f12"/></svg>
  <svg viewBox="0 0 100 100" class="on"><rect width="100" height="100" rx="23" fill="#f4f4f4"/><path d="M12.800 28.500L50 50l0 43A43 43 0 0 1 12.800 28.500z" fill="#509f52"/><path d="M87.200 28.500A43 43 0 0 1 50 93l18.600-32.500L50 28.500z" fill="#f3be48"/><path d="M12.800 28.500A43 43 0 0 1 87.200 28.500H50a21.500 21.500 0 0 0-18.600 32.300z" fill="#d94a3b"/><circle cx="50" cy="50" r="21" fill="#fff"/><circle cx="50" cy="50" r="17" fill="#4480e8"/></svg>
  <i class="divider"></i>
  <svg viewBox="0 0 100 100" class="on"><rect width="100" height="100" rx="23" fill="#fdfdfd"/><g fill="#63bfea"><path d="M41 15a7 7 0 0 1 7 7v8h-7a7 7 0 0 1 0-15z"/><rect x="15" y="34" width="33" height="14.500" rx="7.200"/></g><g fill="#58b280"><rect x="52" y="15" width="14.500" height="33.500" rx="7.200"/><path d="M85 41a7 7 0 0 1-7 7.500h-7V41a7 7 0 0 1 14 0z"/></g><g fill="#cf375d"><rect x="34" y="52" width="14.500" height="33.500" rx="7.200"/><path d="M15 59a7 7 0 0 1 7-7h8v7a7 7 0 0 1-15 0z"/></g><g fill="#e1b34b"><rect x="52" y="52" width="33" height="14.500" rx="7.200"/><path d="M59 85a7 7 0 0 1-7-7v-8h7a7 7 0 0 1 0 15z"/></g></svg>
  <svg viewBox="0 0 100 100" class="on"><circle cx="50" cy="50" r="51.500" fill="#65d572"/><g fill="none" stroke="#101a14" stroke-linecap="round"><path d="M21 34c20-6 43-3 62 8" stroke-width="9.500"/><path d="M23 50c18-5 36-3 52 7" stroke-width="8"/><path d="M25 65c15-4 29-2 43 6" stroke-width="6.500"/></g></svg>
  <svg viewBox="0 0 100 100" class="on"><defs><linearGradient id="wa" x2="0" y2="1"><stop stop-color="#89f783"/><stop offset="1" stop-color="#57bc45"/></linearGradient></defs><rect width="100" height="100" rx="23" fill="url(#wa)"/><path d="M17 83l5-17A35 35 0 1 1 35 79z" fill="none" stroke="#f5f5f5" stroke-width="6.500" stroke-linejoin="round"/><path d="M38 31c-3-1-6 2-7 6 0 15 17 31 31 31 5 0 8-4 8-9l-10-5-5 5c-6-2-11-7-13-13l3-4z" fill="#f5f5f5"/></svg>
  <svg viewBox="0 0 100 100" class="on"><rect width="100" height="100" rx="23" fill="#b6bcc2"/><rect x="3" y="4" width="94" height="93" rx="20" fill="#050505"/><rect x="10" y="11" width="79" height="78" rx="10" fill="#262626"/><path d="M19 19l10 7-10 7M34 37.500h15" fill="none" stroke="#fff" stroke-width="3"/></svg>
  <i class="divider last"></i>
  <svg viewBox="0 0 118 148" class="trash"><defs><linearGradient id="tr"><stop stop-color="#5c6063"/><stop offset=".5" stop-color="#6b6f73"/><stop offset="1" stop-color="#54585b"/></linearGradient></defs><path d="M1 15l14 116c2 20 86 20 88 0L117 15z" fill="url(#tr)"/><ellipse cx="59" cy="15" rx="58" ry="14" fill="#515356" stroke="#85888b" stroke-width="1.500"/></svg>
</div>
</body>
</html>
```
FILE: styles.css
```css
/* 1rem is ten units of a 4480-unit wide desktop */
* { box-sizing: border-box; margin: 0; padding: 0; }
html { font-size: calc(100vw / 448); }
body {
  width: 100vw; height: 100vh; overflow: hidden;
  display: flex; flex-direction: column;
  font-family: "Inter", sans-serif;
  background:
    radial-gradient(circle at 438.500rem 238.300rem, #b9b4ff 0, #1c1478 .7rem, transparent 1.600rem),
    radial-gradient(circle at 435.700rem 232.900rem, #77739c 0, transparent .8rem),
    radial-gradient(circle at 338rem 252rem, #5b3ec0 0, #180d5a 1.500rem, transparent 3rem),
    radial-gradient(circle at 205.500rem 251.800rem, #8e7ad8 0, #21145e 1rem, transparent 1.600rem),
    radial-gradient(circle at 157.800rem 251.500rem, #b8adff 0, transparent .9rem),
    radial-gradient(circle at 179rem 251.500rem, #d0c6ff 0, transparent .7rem),
    radial-gradient(circle at 265.500rem 251.400rem, #d0c6ff 0, transparent .7rem),
    radial-gradient(circle at 35rem 252rem, #120a4a 0, transparent 4rem),
    radial-gradient(circle at 82rem 252rem, #55509a 0, transparent .8rem),
    #010003;
}
ul { list-style: none; }
button, input { font: inherit; border: 0; }
svg { display: block; flex: none; overflow: visible; }
.symbols { position: absolute; width: 0; height: 0; }

/* menu bar */
.menubar { height: 5rem; flex: none; display: flex; color: #fff; font-size: 2.550rem; font-weight: 500; line-height: 4.700rem; letter-spacing: -.025rem; background: linear-gradient(90deg, #04001a, #060028 35%, #060026 60%, #05000f); border-bottom: 2px solid #000; }
.menus { display: grid; grid-template-columns: 6.800rem 14.200rem 8.400rem 8.900rem 9.900rem 12.800rem 17.700rem 13.200rem 8.400rem 13.800rem 6rem; padding-left: 4rem; white-space: nowrap; }
.apple { width: 2.800rem; height: 3.200rem; margin-top: .7rem; }
.app { font-weight: 700; letter-spacing: .03rem; }
.status { margin-left: auto; display: grid; grid-template-columns: 7.500rem 7.300rem 7.200rem 7.200rem 7.400rem 7.400rem 7rem 7.200rem; justify-items: center; align-items: center; padding-right: 1.200rem; }
.status svg { height: 3.400rem; }
.clock { display: flex; justify-content: space-between; width: 25.700rem; margin-right: 3.700rem; color: #e9e7ee; letter-spacing: -.04rem; white-space: nowrap; }

/* browser window */
.window { height: 225.200rem; flex: none; display: flex; flex-direction: column; border-radius: 2rem; overflow: hidden; background: #451785; border-bottom: 2px solid #6b4a9f; box-shadow: 0 .2rem 0 #000, 0 .3rem 0 #26252a, 0 .8rem 0 #2b2a28; }
.tabstrip { height: 8rem; flex: none; display: flex; align-items: center; background: #e2e0f6; box-shadow: inset 0 .2rem #eeedfb; color: #45434f; font-size: 2.350rem; }
.lights { width: 17.800rem; padding-left: 4.200rem; display: flex; gap: 1.600rem; padding-top: .2rem; }
.lights i { width: 2.400rem; height: 2.400rem; border-radius: 50%; }
.red { background: #ed6a5e; } .amber { background: #f4bf4f; } .green { background: #61c454; }
.tab { width: 37rem; height: 3.200rem; flex: none; display: flex; align-items: center; position: relative; padding-left: 2.200rem; border-right: .3rem solid #c5c2f8; }
.tab.plain, .tab.active { border-right-color: transparent; }
.fav { width: 2.800rem; height: 2.800rem; margin: 0 .2rem; }
.fav.big { width: 3.200rem; height: 3.200rem; margin: 0; }
.grey { color: #9a9da1; }
.land { fill: #e2e0f6; }
.disc { background: #fff; border-radius: 50%; display: grid; place-items: center; }
.disc svg { width: 2.600rem; height: 2.600rem; }
.title { width: 22.800rem; margin: 0 2.600rem 0 1.500rem; white-space: nowrap; overflow: hidden; line-height: 3.200rem; letter-spacing: .02rem; transform: translateY(-.1rem); }
.fade { -webkit-mask-image: linear-gradient(90deg, #000 82%, transparent); mask-image: linear-gradient(90deg, #000 82%, transparent); }
.x { width: 1.600rem; height: 1.600rem; }
.tab.active { height: 6.800rem; top: .6rem; width: 35.600rem; margin: 0 .6rem 0 .4rem; padding: 0 0 0 1.600rem; border: 0; border-radius: 2rem 2rem 0 0; background: #fbfaff; color: #1e1c26; z-index: 1; }
.tab.active > * { transform: translateY(-.6rem); }
.tab.active .title { margin-right: 2.500rem; }
.tab.active::before, .tab.active::after { content: ""; position: absolute; bottom: 0; width: 2rem; height: 2rem; }
.tab.active::before { right: 100%; background: radial-gradient(circle at 0 0, transparent 1.980rem, #fbfaff 2rem); }
.tab.active::after { left: 100%; background: radial-gradient(circle at 100% 0, transparent 1.980rem, #fbfaff 2rem); }
.plus { width: 2rem; height: 2rem; margin-left: 2.200rem; }
.tabsearch { width: 5.600rem; height: 5.600rem; margin: 0 1.200rem 0 auto; border-radius: 2rem; background: #efedfb; display: grid; place-items: center; color: #1e1c26; }
.tabsearch svg { width: 1.800rem; }

.toolbar { height: 9.200rem; flex: none; background: #fbfaff; display: flex; align-items: center; padding-left: 2.900rem; color: #45434f; }
.tool { width: 3.200rem; height: 3.200rem; margin-right: 4rem; }
.dim { color: #a9a7ad; }
.omnibox { width: 367.600rem; height: 6.800rem; margin-left: -.5rem; border-radius: 3.400rem; background: #ebe9f2; display: flex; align-items: center; padding: 0 3.200rem 0 1rem; color: #1f1d25; }
.site { width: 4.800rem; height: 4.800rem; border-radius: 50%; background: #fbfaff; display: grid; place-items: center; }
.site svg { width: 2.600rem; }
.url { font-size: 2.800rem; margin-left: 1.700rem; letter-spacing: .012rem; }
.star { width: 3.200rem; margin-left: auto; color: #45434f; }
.extensions { display: flex; align-items: center; margin-left: 3.600rem; gap: 4rem; }
.extensions > svg, .ext, .ext svg { width: 3.200rem; height: 3.200rem; }
.ext { position: relative; }
.count { position: absolute; left: 1.600rem; top: 1.600rem; width: 2.700rem; height: 2.800rem; line-height: 2.800rem; border-radius: .6rem; background: #ebe9f2; color: #1f1d25; font-size: 1.900rem; font-weight: 500; text-align: center; }
.sep { width: .3rem; height: 3.200rem; background: #dcdaf8; border-radius: .2rem; flex: none; }
.extensions .sep { margin: 0 -.4rem; }
.extensions .avatar { width: 4rem; height: 4rem; margin-left: -.4rem; }
.extensions .dots { width: .8rem; margin-left: .8rem; }

.bookmarks { height: 7rem; flex: none; background: #fbfaff; border-bottom: 2px solid #e3e1ea; display: flex; align-items: center; padding: 0 2.900rem 1.200rem 3.700rem; color: #45434f; font-size: 2.350rem; letter-spacing: .012rem; white-space: nowrap; }
.apps { width: 3rem; margin-right: 3.100rem; }
.marks { display: grid; width: 402.200rem; margin-left: 2.600rem; grid-template-columns: 26.500rem 17.400rem 18.600rem 20.200rem 15.800rem 30.800rem 17.400rem 30.800rem 16.400rem 15.700rem 30.700rem 30.800rem 30.800rem 20.400rem 30.800rem 1fr; }
.marks li, .all { display: flex; align-items: center; gap: 1.300rem; }
.marks li svg { width: 3.200rem; height: 3.200rem; }
.marks li svg.g, .marks li svg.gl { width: 2.800rem; height: 2.800rem; margin: 0 .1rem 0 .2rem; }
.gl { color: #3d3f44; }
.more { width: 2.200rem; margin: 0 3.400rem 0 0; }
.all { margin-left: 3.200rem; gap: 1.500rem; }
.all svg { width: 3.200rem; }

/* site */
.page { background: #f0e5f2; height: 200.800rem; display: flex; flex-direction: column; }
.site-header { height: 16rem; flex: none; position: relative; background: #fff; box-shadow: 0 .8rem 1.200rem -.2rem rgba(0,0,0,.12), 0 .2rem .6rem rgba(0,0,0,.12); display: flex; align-items: center; padding: 0 73.600rem 0 74rem; }
.brand { display: flex; align-items: center; gap: 2.900rem; width: 123.300rem; flex: none; }
.logo { width: 7.200rem; height: 7.200rem; }
.brand-name, .foot-name { font-size: 4.800rem; font-weight: 700; line-height: 6.400rem; letter-spacing: .17rem; color: #7d27a0; white-space: nowrap; }
.brand-name { margin-left: -.2rem; }
.brand-sub { font-size: 2.400rem; line-height: 3.200rem; letter-spacing: .075rem; color: #ed9535; margin-left: -.1rem; }
.links { display: grid; grid-template-columns: 15.700rem 34rem 32.600rem 29.900rem 14rem 20.700rem; font-size: 3.600rem; letter-spacing: .078rem; color: #374151; white-space: nowrap; }
.links .home { color: #7d27a0; font-weight: 600; letter-spacing: .17rem; }
.consult { width: 30.200rem; height: 8rem; flex: none; border-radius: 1.200rem; background: linear-gradient(90deg, #7d27a0, #f19e38); color: #fff; font-size: 2.800rem; font-weight: 500; letter-spacing: .1rem; }
.insights { height: 122.200rem; flex: none; padding: 3.400rem 73.600rem 0; }
h2 { font-size: 7.200rem; line-height: 8rem; font-weight: 700; letter-spacing: .15rem; color: #451785; text-align: center; margin-bottom: 9.600rem; }
.cards { display: grid; grid-template-columns: repeat(3, 1fr); gap: 6.400rem; }
.card { height: 85.200rem; border: 2px solid #f6cd87; border-radius: 1.600rem; background: #fff; box-shadow: 0 .2rem .5rem rgba(0,0,0,.08); white-space: nowrap; }
.image { height: 38.400rem; display: flex; font-size: 3.200rem; line-height: 4.800rem; letter-spacing: .075rem; color: #0b0a0d; }
.image svg { width: 3.200rem; height: 3.200rem; }
.body { padding: 4.800rem; display: flex; flex-direction: column; }
h3 { font-size: 4rem; line-height: 5.600rem; font-weight: 700; letter-spacing: -.05rem; color: #5f1f92; }
.body p { margin: 1.600rem 0 3.200rem; font-size: 3.200rem; line-height: 4.800rem; letter-spacing: .098rem; color: #7e29a0; }
time { font-size: 2.800rem; line-height: 4rem; letter-spacing: -.02rem; color: #ee9536; margin-bottom: 4.800rem; }
.body button { height: 8rem; border-radius: 1.200rem; background: #f19e38; color: #fff; font-size: 2.800rem; font-weight: 500; letter-spacing: .08rem; }

.footer { flex: 1; background: #451785; padding: 9.600rem 73.600rem 0; font-size: 3.200rem; line-height: 4.800rem; color: #fce1b6; white-space: nowrap; }
.columns { display: grid; grid-template-columns: repeat(3, 76.800rem) 70.400rem; height: 45.800rem; border-bottom: 2px solid #6e2595; }
.foot-name { color: #f19e38; margin-bottom: 3.200rem; }
.about { color: #fff; letter-spacing: .082rem; }
.offer { letter-spacing: .076rem; }
.quick ul { letter-spacing: .055rem; }
.services ul { letter-spacing: .13rem; }
.social { display: flex; gap: 3.200rem; margin-top: 3.200rem; }
.social svg { width: 4.800rem; height: 4.800rem; fill: none; stroke: #f9cd88; stroke-width: 2; stroke-linecap: round; stroke-linejoin: round; }
h4 { font-size: 4rem; font-weight: 700; line-height: 5.600rem; letter-spacing: .03rem; color: #76b76a; margin-bottom: 3.200rem; }
.footer ul { display: flex; flex-direction: column; gap: 1.600rem; }
.form { display: flex; height: 8rem; margin-top: 3.200rem; border-radius: 1.600rem; overflow: hidden; background: #5f1f92; }
.form input { width: 47.500rem; padding-left: 1.600rem; background: none; letter-spacing: .12rem; }
.form input::placeholder { color: #f6cd85; opacity: 1; }
.form button { flex: 1; background: #f19e38; color: #fff; font-weight: 700; letter-spacing: .07rem; }

/* dock */
.dock { position: relative; width: 416.700rem; height: 19.600rem; margin: 1.200rem 0 0 15.700rem; padding: 2.400rem 0 0 2.300rem; display: flex; gap: 3.990rem; border: 2px solid #39363d; border-radius: 4.600rem; background: linear-gradient(90deg, #14131a, #17141f 15%, #1b1420 40%, #1a1120 62%, #141217 80%, #151418); box-shadow: 0 0 5rem rgba(0,0,0,.35); }
.dock svg { width: 13.400rem; height: 13.400rem; }
.dock > .on { background: radial-gradient(circle at 50% 16.200rem, #97949b 0, #97949b .38rem, transparent .45rem); height: 17rem; padding-bottom: 3.600rem; }
.petals rect { mix-blend-mode: multiply; }
.badged { position: relative; height: 13.400rem; }
.badge { position: absolute; left: 8.900rem; top: -1.800rem; width: 6.400rem; height: 6.400rem; border-radius: 50%; background: #e24a3b; color: #fff; font-size: 3.500rem; font-weight: 400; line-height: 6.400rem; text-align: center; }
.divider { width: .2rem; height: 14.400rem; background: #444148; margin: 0 1.600rem 0 2rem; flex: none; }
.divider.last { margin: 0 2.300rem 0 1.900rem; }
.dock .trash { width: 11.800rem; height: 14.800rem; margin-top: -.6rem; }
```
